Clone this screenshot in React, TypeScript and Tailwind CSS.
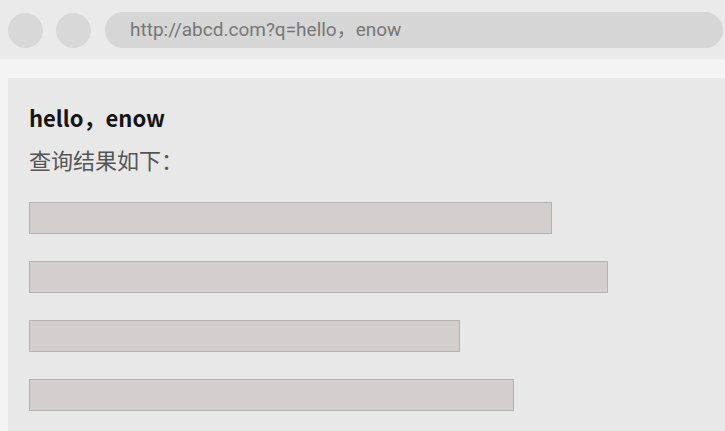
const bars = [523, 579, 431, 485]

export default function App() {
  return (
    <div className="flex h-[431px] w-[725px] flex-col overflow-hidden bg-[#f4f4f4] font-['Noto_Sans_CJK_SC',sans-serif]">
      {/* browser chrome */}
      <div className="flex h-[59px] items-center gap-[13px] bg-[#eaeaea] pl-[8px] pr-[2px] pt-[1px]">
        <div className="h-[35px] w-[35px] shrink-0 rounded-full bg-[#d8d8d8]" />
        <div className="h-[35px] w-[35px] shrink-0 rounded-full bg-[#d8d8d8]" />
        <div className="ml-[1px] flex h-[36px] flex-1 items-center rounded-full bg-[#d6d6d6] pl-[25px] font-['Roboto','Noto_Sans_CJK_SC',sans-serif] text-[19px] text-[#777]">
          http://abcd.com?q=hello，enow
        </div>
      </div>

      {/* page */}
      <div className="mt-[19px] ml-[8px] flex flex-1 flex-col bg-[#e8e8e8] pl-[21px] pt-[24px]">
        <h1 className="text-[22px] leading-[30px] font-bold text-[#141414]">hello，enow</h1>
        <p className="mt-[12px] text-[22px] leading-[30px] text-[#555]">查询结果如下：</p>
        <div className="mt-[28px] flex flex-col gap-[27px]">
          {bars.map((w, i) => (
            <div
              key={i}
              className="h-[32px] border border-[#b5b2b2] bg-[#d4cfcf]"
              style={{ width: w }}
            />
          ))}
        </div>
      </div>
    </div>
  )
}
